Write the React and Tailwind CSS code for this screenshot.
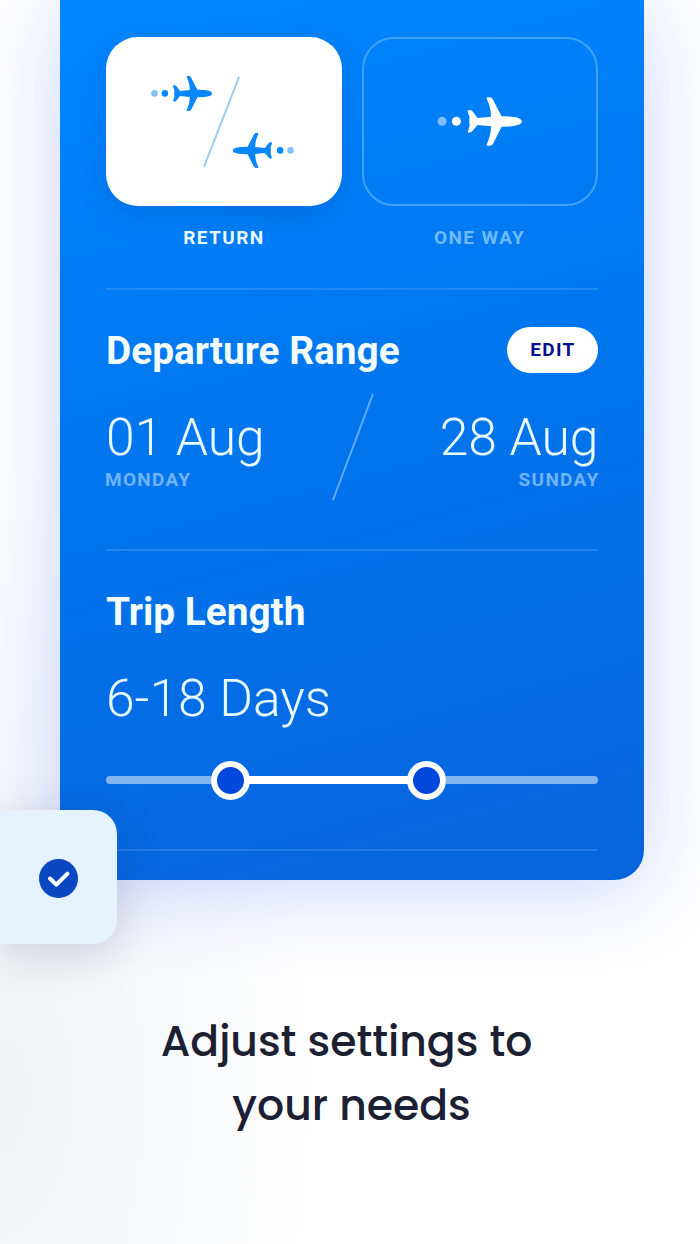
import React from "react";

const Plane = ({ className }) => (
  <svg viewBox="0 0 254 145" fill="currentColor" className={className}>
    <circle cx="15" cy="72" r="13.5" opacity="0.5" />
    <circle cx="58" cy="72" r="13.5" />
    <path d="M151 0H158Q164 0 167 7L193 57L222 58C243 59 254 66 254 72.5C254 79 243 85 222 87L193 88L168 138Q164 145 158 145H151Q147 145 149 140C156 124 162 106 161 87L121 83L106 101Q102 106 94 106Q91 105 93 101L98 83Q94 79 98 76Q93 73 98 69Q94 65 98 62L92 43Q91 39 94 38Q102 37 106 42L121 62L161 58C162 39 156 21 149 5Q147 0 151 0Z" />
  </svg>
);

const Slash = ({ className }) => (
  <svg
    viewBox="0 0 42 108"
    preserveAspectRatio="none"
    fill="none"
    stroke="currentColor"
    strokeWidth="1.9"
    className={className}
  >
    <path d="M41 1L1 107" vectorEffect="non-scaling-stroke" />
  </svg>
);

const Divider = () => <div className="h-0.5 bg-[#7fc0ff]/25" />;

const TripTypes = () => (
  <div className="flex gap-5 pt-[37px]">
    <button className="flex flex-1 flex-col items-center">
      <span className="flex h-[169px] w-full justify-center rounded-[32px] bg-white pt-[39px] pr-[3px] text-[#0787fa] shadow-[0_10px_28px_rgba(0,50,140,0.18)]">
        <Plane className="h-[35px] w-[63px]" />
        <Slash className="-mr-2 -ml-2.5 h-[92px] w-[37px] text-[#9accf2]" />
        <Plane className="mt-[57px] h-[35px] w-[63px] -scale-x-100" />
      </span>
      <span className="mt-[20px] text-[19px] leading-6 font-bold tracking-[1.4px] text-[#e8f8ff]">
        RETURN
      </span>
    </button>
    <button className="flex flex-1 flex-col items-center">
      <span className="flex h-[169px] w-full items-center justify-center rounded-[32px] border-2 border-[#3fa2fb] text-white">
        <Plane className="h-[49px] w-[85px]" />
      </span>
      <span className="mt-[20px] text-[19px] leading-6 font-bold tracking-[1.4px] text-[#70baff]">
        ONE WAY
      </span>
    </button>
  </div>
);

const DepartureRange = () => (
  <section className="h-[259px] pt-9">
    <div className="flex h-[48px] items-center justify-between">
      <h2 className="pt-[2px] text-[38.8px] leading-[48px] font-bold text-[#f2fcff]">
        Departure Range
      </h2>
      <button className="h-[46px] w-[91px] rounded-full bg-white pl-0.5 text-[19px] font-bold tracking-[1.3px] text-[#05108c]">
        EDIT
      </button>
    </div>
    <div className="mt-[19px] flex justify-between">
      <div className="w-[226px] pt-[15px]">
        <p className="text-[51.6px] leading-[60px] font-light text-[#e8faff]">
          01 Aug
        </p>
        <p className="-ml-px text-[19px] leading-6 font-bold tracking-[1.3px] text-[#70b5fb]">
          MONDAY
        </p>
      </div>
      <Slash className="h-[108px] w-[42px] text-[#63aefb]" />
      <div className="w-[224px] pt-[15px] text-right">
        <p className="-mr-px text-[51.6px] leading-[60px] font-light text-[#e8faff]">
          28 Aug
        </p>
        <p className="-mr-[2px] text-[19px] leading-6 font-bold tracking-[1.3px] text-[#70b5fb]">
          SUNDAY
        </p>
      </div>
    </div>
  </section>
);

const Knob = () => (
  <span className="size-[39px] shrink-0 rounded-full border-[6.5px] border-white bg-[#0348dd]" />
);

const TripLength = () => (
  <section className="h-[298px] pt-[37px]">
    <h2 className="text-[38.8px] leading-[48px] font-bold text-[#f2fcff]">
      Trip Length
    </h2>
    <p className="mt-[33px] text-[51.6px] leading-[60px] font-light text-[#e8faff]">
      6-18 Days
    </p>
    <div className="mt-[32px] flex items-center">
      <span className="mb-px h-2 w-[105px] rounded-l-full bg-[#83b5f0]" />
      <Knob />
      <span className="-mx-px mb-px h-2 w-[159px] bg-white" />
      <Knob />
      <span className="mb-px h-2 flex-1 rounded-r-full bg-[#83b5f0]" />
    </div>
  </section>
);

const App = () => {
  return (
    <div className="relative h-[1244px] w-[700px] overflow-hidden bg-white bg-[radial-gradient(ellipse_320px_620px_at_0%_88%,#f1f2f6_0%,#f8f9fb_50%,#ffffff_100%)] font-['Roboto',sans-serif]">
      <main className="ml-[60px] h-[880px] w-[583.5px] rounded-b-[30px] bg-[linear-gradient(165deg,#0087ff_0%,#0078f0_40%,#0763db_100%)] px-[46px] shadow-[0_10px_85px_rgba(40,75,255,0.24)]">
        <TripTypes />
        <div className="h-[38px]" />
        <Divider />
        <DepartureRange />
        <Divider />
        <TripLength />
        <Divider />
      </main>

      <aside className="absolute top-[810px] left-0 flex h-[134px] w-[117px] items-center rounded-r-[24px] bg-[#e4f3ff] pl-[39px] shadow-[0_10px_45px_rgba(30,35,80,0.18)]">
        <svg viewBox="0 0 39 39" fill="none" className="mt-0.5 size-[39px]">
          <circle cx="19.5" cy="19.5" r="19.5" fill="#0c47c2" />
          <path
            d="M11 19.5L17.2 25.7L28.5 14.6"
            stroke="#fff"
            strokeWidth="4"
            strokeLinecap="round"
            strokeLinejoin="round"
          />
        </svg>
      </aside>

      <h1 className="mt-[129px] flex flex-col items-center font-['Poppins','Inter',sans-serif] text-[42.5px] leading-[64px] font-medium text-[#1b2033]">
        <span className="mr-[7px]">Adjust settings to</span>
        <span className="ml-[3px]">your needs</span>
      </h1>
    </div>
  );
};

export default App;
